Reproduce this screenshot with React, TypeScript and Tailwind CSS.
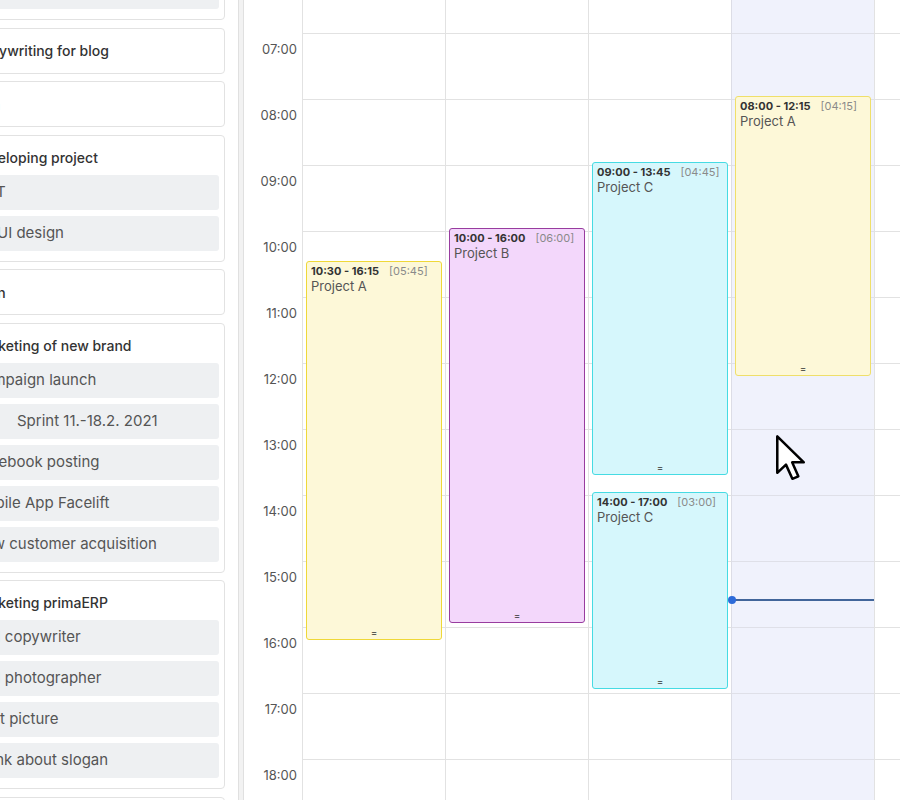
import React from 'react';

interface Item {
  pre?: string;
  text: string;
  preW?: string;
}

interface Card {
  title: string;
  items?: Item[];
  muted?: boolean;
}

interface CalEvent {
  start: number;
  end: number;
  label: string;
  project: string;
  tone: 'yellow' | 'purple' | 'cyan' | 'yellowLight';
}

const cards: Card[] = [
  { title: 'Research', items: [{ text: 'Competitor analysis' }] },
  { title: 'Copywriting for blog' },
  { title: 'Plan', muted: true },
  {
    title: 'Developing project',
    items: [
      { pre: 'RES', text: 'T', preW: 'w-[23px]' },
      { pre: 'UX/', text: 'UI design', preW: 'w-[24px]' },
    ],
  },
  { title: 'Train' },
  {
    title: 'Marketing of new brand',
    items: [
      { text: 'Campaign launch' },
      { text: 'FB\u00a0\u00a0\u00a0\u00a0\u00a0 Sprint 11.-18.2. 2021' },
      { text: 'Facebook posting' },
      { text: 'Mobile App Facelift' },
      { text: 'New customer acquisition' },
    ],
  },
  {
    title: 'Marketing primaERP',
    items: [
      { pre: 'Idea', text: 'l copywriter', preW: 'w-[24px]' },
      { pre: 'Idea', text: 'l photographer', preW: 'w-[24px]' },
      { pre: 'Prin', text: 't picture', preW: 'w-[27px]' },
      { text: 'Think about slogan' },
    ],
  },
  { title: 'Sales' },
];

const hours = ['07:00', '08:00', '09:00', '10:00', '11:00', '12:00', '13:00', '14:00', '15:00', '16:00', '17:00', '18:00'];

const columns: CalEvent[][] = [
  [{ start: 10.5, end: 16.25, label: '10:30 - 16:15', project: 'Project A', tone: 'yellow' }],
  [{ start: 10, end: 16, label: '10:00 - 16:00', project: 'Project B', tone: 'purple' }],
  [
    { start: 9, end: 13.75, label: '09:00 - 13:45', project: 'Project C', tone: 'cyan' },
    { start: 14, end: 17, label: '14:00 - 17:00', project: 'Project C', tone: 'cyan' },
  ],
  [{ start: 8, end: 12.25, label: '08:00 - 12:15', project: 'Project A', tone: 'yellowLight' }],
];

const toneClass: Record<CalEvent['tone'], string> = {
  yellow: 'bg-[#fdf8d8] border-[#efd838]',
  yellowLight: 'bg-[#fdf8d8] border-[#efdf6a]',
  purple: 'bg-[#f3d7fb] border-[#983c9f]',
  cyan: 'bg-[#d6f7fc] border-[#46dbe3]',
};

const ROW = 66;
const TOP = 33;

function fmtDur(e: CalEvent) {
  const mins = Math.round((e.end - e.start) * 60);
  const h = String(Math.floor(mins / 60)).padStart(2, '0');
  const m = String(mins % 60).padStart(2, '0');
  return `[${h}:${m}]`;
}

function EventBlock({ ev }: { ev: CalEvent }) {
  const top = TOP + (ev.start - 7) * ROW - 3;
  const height = (ev.end - ev.start) * ROW - 1;
  return (
    <div
      className={`absolute left-[3px] right-[3px] border rounded-[3px] px-[4px] pt-[2px] ${toneClass[ev.tone]}`}
      style={{ top, height }}
    >
      <div className="flex items-baseline text-[11px] leading-[14px] whitespace-nowrap">
        <span className="font-bold text-[#333]">{ev.label}</span>
        <span className="ml-[10px] text-[#8a8a8a]">{fmtDur(ev)}</span>
      </div>
      <div className="text-[13px] leading-[16px] text-[#555]">{ev.project}</div>
      <div className="absolute bottom-[2px] left-0 right-0 text-center text-[10px] leading-none text-[#333]">=</div>
    </div>
  );
}

function DayColumn({ events, today, width }: { events: CalEvent[]; today?: boolean; width: string }) {
  return (
    <div className={`relative shrink-0 border-l ${width} ${today ? 'bg-[#f0f2fc] border-[#dcdde6]' : 'border-[#e2e2e2]'}`}>
      <div className="h-[33px]" />
      {hours.map((h) => (
        <div key={h} className={`h-[66px] border-t ${today ? 'border-[#dfe0e8]' : 'border-[#e2e2e2]'}`} />
      ))}
      {events.map((ev) => (
        <EventBlock key={ev.label} ev={ev} />
      ))}
      {today && (
        <>
          <div className="absolute left-0 right-[-1px] top-[599px] h-[2px] bg-[#41659a]" />
          <div className="absolute left-[-4px] top-[596px] w-[8px] h-[8px] rounded-full bg-[#2d6bd9]" />
        </>
      )}
    </div>
  );
}

export default function App() {
  return (
    <div className="relative w-[900px] h-[800px] overflow-hidden flex bg-white font-['Inter',sans-serif]">
      <aside className="w-[238px] shrink-0 overflow-hidden">
        <div className="ml-[-40px] w-[265px] mt-[-66px] flex flex-col gap-[7.5px]">
          {cards.map((c) => (
            <div key={c.title} className="rounded-[4px] border border-[#e2e2e2] bg-white">
              {c.items ? (
                <>
                  <div className="h-[39px] pt-[4px] pl-[11px] flex items-center text-[14px] font-medium text-[#333] whitespace-nowrap">
                    {c.title}
                  </div>
                  <div className="flex flex-col gap-[6px] px-[5px] pb-[10px]">
                    {c.items.map((it) => (
                      <div
                        key={it.text}
                        className="h-[35px] rounded-[3px] bg-[#eef0f2] pl-[7px] flex items-center text-[15px] text-[#555] whitespace-nowrap"
                      >
                        {it.pre && (
                          <span className={`shrink-0 min-w-0 overflow-hidden flex justify-end ${it.preW}`}>
                            <span className="shrink-0">{it.pre}</span>
                          </span>
                        )}
                        <span>{it.text}</span>
                      </div>
                    ))}
                  </div>
                </>
              ) : (
                <div
                  className={`h-[44px] pl-[11px] flex items-center text-[14px] whitespace-nowrap ${
                    c.muted ? 'text-[#999]' : 'font-medium text-[#333]'
                  }`}
                >
                  {c.title}
                </div>
              )}
            </div>
          ))}
        </div>
      </aside>

      <div className="w-[6px] shrink-0 bg-[#f2f2f2] border-l border-r border-[#e0e0e0]" />

      <div className="w-[58px] shrink-0">
        <div className="h-[33px]" />
        {hours.map((h) => (
          <div key={h} className="h-[66px] pt-[8px] pr-[5px] text-right text-[13px] leading-[16px] text-[#555]">
            {h}
          </div>
        ))}
      </div>

      <DayColumn events={columns[0]} width="w-[143px]" />
      <DayColumn events={columns[1]} width="w-[143px]" />
      <DayColumn events={columns[2]} width="w-[143px]" />
      <DayColumn events={columns[3]} width="w-[143px]" today />
      <DayColumn events={[]} width="w-[40px]" />

      <svg
        className="absolute left-[775px] top-[434px]"
        width="32"
        height="48"
        viewBox="0 0 14 21"
      >
        <path
          d="M1 1 L1 17 L4.8 13.4 L7.6 19.6 L10.2 18.5 L7.5 12.4 L12.6 12.4 Z"
          fill="#fff"
          stroke="#000"
          strokeWidth="1.1"
          strokeLinejoin="round"
        />
      </svg>
    </div>
  );
}
